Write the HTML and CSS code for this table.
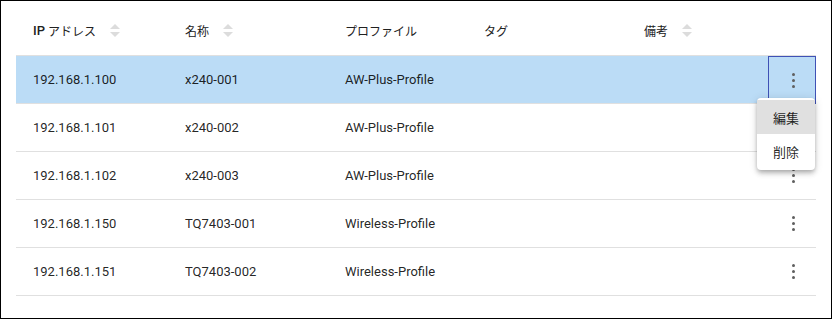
FILE: index.html
```html
<!DOCTYPE html>
<html lang="ja">
<head>
    <meta charset="utf-8">
    <title>デバイス一覧</title>
    <link rel="stylesheet" href="styles.css">
</head>
<body>
<div class="frame">
    <div class="grid">
        <!-- ヘッダー -->
        <div class="row head">
            <div class="cell"><b>IP</b>&nbsp;アドレス<span class="sort"></span></div>
            <div class="cell">名称<span class="sort"></span></div>
            <div class="cell">プロファイル</div>
            <div class="cell">タグ</div>
            <div class="cell">備考<span class="sort"></span></div>
            <div class="cell"></div>
        </div>

        <div class="row selected">
            <div class="cell">192.168.1.100</div>
            <div class="cell">x240-001</div>
            <div class="cell">AW-Plus-Profile</div>
            <div class="cell"></div>
            <div class="cell"></div>
            <div class="cell act focused">
                <span class="kebab"><i></i><i></i><i></i></span>
                <div class="menu">
                    <div class="item hover">編集</div>
                    <div class="item">削除</div>
                </div>
            </div>
        </div>
        <div class="row">
            <div class="cell">192.168.1.101</div>
            <div class="cell">x240-002</div>
            <div class="cell">AW-Plus-Profile</div>
            <div class="cell"></div>
            <div class="cell"></div>
            <div class="cell act"><span class="kebab"><i></i><i></i><i></i></span></div>
        </div>
        <div class="row">
            <div class="cell">192.168.1.102</div>
            <div class="cell">x240-003</div>
            <div class="cell">AW-Plus-Profile</div>
            <div class="cell"></div>
            <div class="cell"></div>
            <div class="cell act"><span class="kebab"><i></i><i></i><i></i></span></div>
        </div>
        <div class="row">
            <div class="cell">192.168.1.150</div>
            <div class="cell">TQ7403-001</div>
            <div class="cell">Wireless-Profile</div>
            <div class="cell"></div>
            <div class="cell"></div>
            <div class="cell act"><span class="kebab"><i></i><i></i><i></i></span></div>
        </div>
        <div class="row">
            <div class="cell">192.168.1.151</div>
            <div class="cell">TQ7403-002</div>
            <div class="cell">Wireless-Profile</div>
            <div class="cell"></div>
            <div class="cell"></div>
            <div class="cell act"><span class="kebab"><i></i><i></i><i></i></span></div>
        </div>
    </div>
</div>
</body>
</html>
```

FILE: styles.css
```css
*{ margin:0; padding:0; box-sizing:border-box;}
body{
    background:#fff;
    font-family:Roboto, "Noto Sans CJK JP", sans-serif;
    font-size:13px;
    color:rgba(0,0,0,0.87);
}
.frame{
    width:832px;
    height:319px;
    border:1px solid #000;
    padding:0 15px;
}
.row{
    display:grid;
    grid-template-columns:152px 160px 139px 160px 1fr 48px;
    height:48px;
    border-bottom:1px solid #e0e0e0;
}
.row.head{
    height:55px;
    padding-top:4px;
    font-size:12px;
    color:#212121;
}
.row.head b{
    font-size:13px;
    font-weight:500;
}
.cell{
    display:flex;
    align-items:center;
    padding-left:17px;
    position:relative;
}
.row.selected{
    background:#bbdcf6;
}
/* ソートの上下矢印 */
.sort{
    display:inline-flex;
    flex-direction:column;
    gap:3px;
    margin-left:14px;
}
.sort:before,.sort:after{
    content:'';
    border-left:5px solid transparent;
    border-right:5px solid transparent;
}
.sort:before{ border-bottom:5px solid #dcdcdc;}
.sort:after{ border-top:5px solid #dcdcdc;}

.cell.act{
    padding-left:0;
    justify-content:center;
}
.cell.focused{
    border:1px solid #3f51b5;
    margin-bottom:-1px;
}
.kebab{
    display:flex;
    flex-direction:column;
    gap:3px;
    margin-left:2px;
}
.kebab i{
    width:3px;
    height:3px;
    border-radius:50%;
    background:#5f5f5f;
}
/* 行メニュー */
.menu{
    position:absolute;
    left:-12px;
    top:41px;
    width:58px;
    background:#fff;
    border-radius:4px;
    box-shadow:0 2px 4px -1px rgba(0,0,0,0.2),0 4px 5px 0 rgba(0,0,0,0.14),0 1px 10px 0 rgba(0,0,0,0.12);
    padding:2px 0;
    z-index:2;
}
.menu .item{
    height:34px;
    display:flex;
    align-items:center;
    justify-content:center;
    font-size:13px;
}
.menu .item.hover{
    background:#e0e0e0;
}
```
